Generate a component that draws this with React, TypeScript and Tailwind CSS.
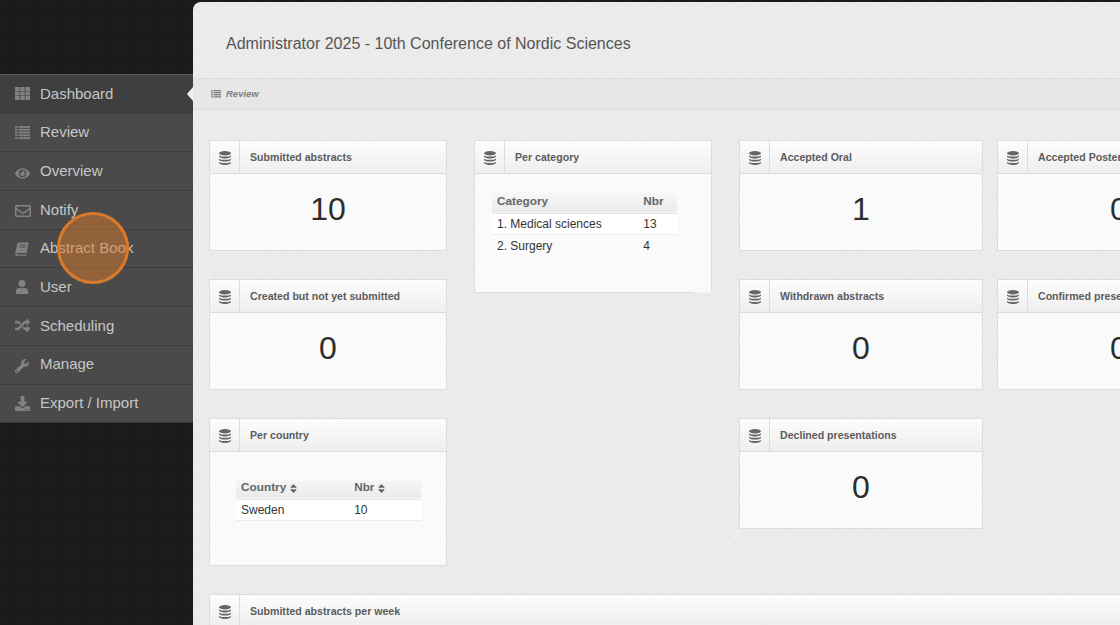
import type { ReactNode } from "react";
import { FaDownload, FaEye, FaRandom, FaRegEnvelope, FaSort, FaUser, FaWrench } from "react-icons/fa";

function GridIcon() {
  return (
    <svg width="15" height="13" viewBox="0 0 15 13" fill="currentColor">
      {[0, 4.5, 9].map((y) =>
        [0, 5.25, 10.5].map((x) => <rect key={`${x}-${y}`} x={x} y={y} width="4.5" height="4" />),
      )}
    </svg>
  );
}

function ListIcon({ size = 15 }: { size?: number }) {
  return (
    <svg width={size} height={(size * 13) / 15} viewBox="0 0 15 13" fill="currentColor">
      {[0, 2.8, 5.6, 8.4, 11.2].map((y) => (
        <g key={y}>
          <rect x="0" y={y} width="2.6" height="1.8" />
          <rect x="3.6" y={y} width="11.4" height="1.8" />
        </g>
      ))}
    </svg>
  );
}

function BookIcon() {
  return (
    <svg width="14" height="14" viewBox="0 0 14 14" fill="currentColor">
      <path d="M3.6 0.5H13.6L11.4 11H2.6C1.9 11 1.7 11.5 1.8 12C1.9 12.4 2.2 12.6 2.7 12.6H11.8L11.5 13.8H2.2C0.9 13.8 0 12.9 0.3 11.3L2.2 2C2.4 1 2.9 0.5 3.6 0.5Z" />
      <path d="M5 3.2H11M4.6 5.2H10.6" stroke="#4a4a4a" strokeWidth="0.8" fill="none" />
    </svg>
  );
}

function DbIcon() {
  return (
    <svg width="12" height="14" viewBox="0 0 12 14" fill="currentColor">
      <ellipse cx="6" cy="2.2" rx="6" ry="2.2" />
      <path d="M0 4V5.2C0 6.4 2.7 7.4 6 7.4S12 6.4 12 5.2V4C12 5.2 9.3 5.6 6 5.6S0 5.2 0 4Z" />
      <path d="M0 7.2V8.4C0 9.6 2.7 10.6 6 10.6S12 9.6 12 8.4V7.2C12 8.4 9.3 8.8 6 8.8S0 8.4 0 7.2Z" />
      <path d="M0 10.4V11.8C0 13 2.7 14 6 14S12 13 12 11.8V10.4C12 11.6 9.3 12 6 12S0 11.6 0 10.4Z" />
    </svg>
  );
}

const navItems = [
  { label: "Dashboard", icon: <GridIcon />, active: true },
  { label: "Review", icon: <ListIcon /> },
  { label: "Overview", icon: <FaEye className="text-[15px] translate-y-[2px]" /> },
  { label: "Notify", icon: <FaRegEnvelope className="text-[16px] translate-y-[1px]" /> },
  { label: "Abstract Book", icon: <BookIcon /> },
  { label: "User", icon: <FaUser className="text-[14px]" /> },
  { label: "Scheduling", icon: <FaRandom className="text-[15px]" /> },
  { label: "Manage", icon: <FaWrench className="text-[14px] translate-y-[1px]" /> },
  { label: "Export / Import", icon: <FaDownload className="text-[15px]" /> },
];

function Sidebar() {
  return (
    <nav className="mt-[74px] w-[193px] shrink-0 self-start border-t border-[#5a5a5a] bg-[#4a4a4a]">
      {navItems.map((item) => (
        <div
          key={item.label}
          className={`relative flex h-[38.7px] items-center border-b border-[#3c3c3c] pl-[15px] ${item.active ? "bg-[#3f3f3f]" : "bg-[#4a4a4a]"}`}
        >
          <span className="w-[25px] shrink-0 text-[#828282]">{item.icon}</span>
          <span className="text-[15px] text-[#c6c6c6]">{item.label}</span>
          {item.active && (
            <span className="absolute right-0 top-[12px] border-y-[7px] border-r-[6px] border-y-transparent border-r-[#f0f0f0]" />
          )}
        </div>
      ))}
    </nav>
  );
}

function Widget({ title, children, className }: { title: string; children: ReactNode; className?: string }) {
  return (
    <section className={`relative border border-[#dcdcdc] bg-[#fafafa] ${className ?? ""}`}>
      <header className="flex h-[33px] items-stretch border-b border-[#dcdcdc] bg-gradient-to-b from-[#fdfdfd] to-[#eeeeee]">
        <div className="flex w-[30px] shrink-0 items-center justify-center border-r border-[#dcdcdc] pt-[1px] text-[#666666]">
          <DbIcon />
        </div>
        <h3 className="flex items-center whitespace-nowrap pl-[10px] pt-[1px] text-[10.6px] font-bold text-[#5c5c5c]">{title}</h3>
      </header>
      {children}
    </section>
  );
}

function StatWidget({ title, value }: { title: string; value: number }) {
  return (
    <Widget title={title} className="h-[111px]">
      <div className="pt-[16px] text-center text-[32px] leading-[38px] text-[#2e2e2e]">{value}</div>
    </Widget>
  );
}

function HeadRow({ cols, sortable }: { cols: string[]; sortable?: boolean }) {
  return (
    <tr className="h-[21px] border-b border-[#e4e4e4] bg-gradient-to-b from-[#f8f8f8] to-[#eaeaea] text-left">
      {cols.map((c) => (
        <th key={c} className="px-[5px] text-[11.8px] font-bold text-[#666666]">
          <span className="inline-flex items-center gap-[2px]">
            {c}
            {sortable && <FaSort className="text-[11px]" />}
          </span>
        </th>
      ))}
    </tr>
  );
}

function Row({ cells, striped }: { cells: string[]; striped?: boolean }) {
  return (
    <tr className={`h-[21.5px] ${striped ? "border-b border-[#ececec] bg-white" : ""}`}>
      {cells.map((c) => (
        <td key={c} className="px-[5px] text-[12px] text-[#333333]">{c}</td>
      ))}
    </tr>
  );
}

export default function App() {
  return (
    <div className="relative flex h-[625px] w-[1120px] overflow-hidden bg-[#1a1a1a] bg-[radial-gradient(#232323_1px,transparent_1px)] bg-[size:3px_3px] font-['Liberation_Sans',Arial,sans-serif]">
      <Sidebar />

      <main className="mt-[2px] w-[927px] shrink-0 rounded-tl-[8px] bg-[#ebebeb] bg-[repeating-linear-gradient(130deg,transparent_0px,transparent_36px,#efefef_37px,transparent_38px),repeating-linear-gradient(130deg,#ebebeb_0px,#ececec_5px,#eaeaea_9px,#ebebeb_13px)]">
        <div className="flex h-[76px] items-center pl-[33px] pt-[8px] text-[16px] text-[#555555]">
          Administrator 2025 - 10th Conference of Nordic Sciences
        </div>
        <div className="flex h-[32px] items-center gap-[5px] border-y border-[#dddddd] bg-[#e7e7e7] pl-[18px] text-[9.5px] font-bold italic text-[#808080]">
          <ListIcon size={10} />
          <span>Review</span>
        </div>

        <div className="pl-[16px] pt-[30px]">
          <div className="flex items-start">
            <div className="flex w-[238px] shrink-0 flex-col gap-[28px]">
              <StatWidget title="Submitted abstracts" value={10} />
              <StatWidget title="Created but not yet submitted" value={0} />
              <Widget title="Per country" className="h-[148px]">
                <table className="ml-[26px] mt-[26px] w-[185px] border-collapse">
                  <thead><HeadRow cols={["Country", "Nbr"]} sortable /></thead>
                  <tbody><Row cells={["Sweden", "10"]} striped /></tbody>
                </table>
              </Widget>
            </div>

            <div className="ml-[27px] w-[238px] shrink-0">
              <Widget title="Per category" className="h-[153px]">
                <table className="ml-[17px] mt-[18px] w-[185px] border-collapse">
                  <thead><HeadRow cols={["Category", "Nbr"]} /></thead>
                  <tbody>
                    <Row cells={["1. Medical sciences", "13"]} striped />
                    <Row cells={["2. Surgery", "4"]} />
                  </tbody>
                </table>
                {/* the bottom edge fades out before the corner */}
                <span className="absolute -bottom-px -right-px h-px w-[18px] bg-[#f4f4f4]" />
              </Widget>
            </div>

            <div className="ml-[27px] flex w-[244px] shrink-0 flex-col gap-[28px]">
              <StatWidget title="Accepted Oral" value={1} />
              <StatWidget title="Withdrawn abstracts" value={0} />
              <StatWidget title="Declined presentations" value={0} />
            </div>

            <div className="ml-[14px] flex w-[244px] shrink-0 flex-col gap-[28px]">
              <StatWidget title="Accepted Poster" value={0} />
              <StatWidget title="Confirmed presentations" value={0} />
            </div>
          </div>

          <Widget title="Submitted abstracts per week" className="mt-[28px] h-[100px] w-[1000px]">
            <div />
          </Widget>
        </div>
      </main>

      {/* tutorial highlight over the menu */}
      <div className="absolute left-[57px] top-[212px] h-[72px] w-[72px] rounded-full border-[3px] border-[#d9792b] bg-[#d9792b]/50" />
    </div>
  );
}
